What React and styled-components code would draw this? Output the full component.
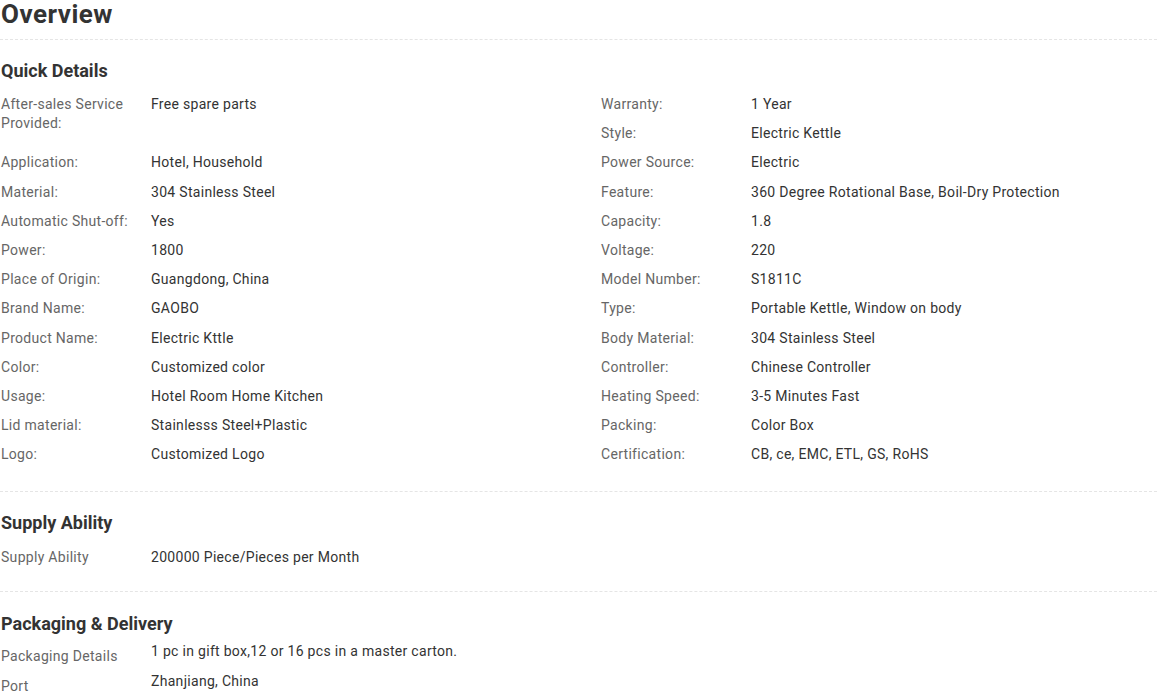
import React from 'react'
import styled, { createGlobalStyle } from 'styled-components'

const Global = createGlobalStyle`
  body {
    margin: 0;
    background: #fff;
    font-family: Roboto, "Liberation Sans", Arial, sans-serif;
    color: #333;
  }
`

const quick = [
  { label: 'After-sales Service Provided:', value: 'Free spare parts', tall: true },
  { label: 'Warranty:', value: '1 Year' },
  { label: 'Style:', value: 'Electric Kettle' },
  { label: 'Application:', value: 'Hotel, Household' },
  { label: 'Power Source:', value: 'Electric' },
  { label: 'Material:', value: '304 Stainless Steel' },
  { label: 'Feature:', value: '360 Degree Rotational Base, Boil-Dry Protection' },
  { label: 'Automatic Shut-off:', value: 'Yes' },
  { label: 'Capacity:', value: '1.8' },
  { label: 'Power:', value: '1800' },
  { label: 'Voltage:', value: '220' },
  { label: 'Place of Origin:', value: 'Guangdong, China' },
  { label: 'Model Number:', value: 'S1811C' },
  { label: 'Brand Name:', value: 'GAOBO' },
  { label: 'Type:', value: 'Portable Kettle, Window on body' },
  { label: 'Product Name:', value: 'Electric Kttle' },
  { label: 'Body Material:', value: '304 Stainless Steel' },
  { label: 'Color:', value: 'Customized color' },
  { label: 'Controller:', value: 'Chinese Controller' },
  { label: 'Usage:', value: 'Hotel Room Home Kitchen' },
  { label: 'Heating Speed:', value: '3-5 Minutes Fast' },
  { label: 'Lid material:', value: 'Stainlesss Steel+Plastic' },
  { label: 'Packing:', value: 'Color Box' },
  { label: 'Logo:', value: 'Customized Logo' },
  { label: 'Certification:', value: 'CB, ce, EMC, ETL, GS, RoHS' },
]

const packaging = [
  { label: 'Packaging Details', value: '1 pc in gift box,12 or 16 pcs in a master carton.' },
  { label: 'Port', value: 'Zhanjiang, China' },
]

export default function App() {
  return (
    <Page>
      <Global />
      <Title>Overview</Title>

      <Section>
        <Heading>Quick Details</Heading>
        <Grid>
          {quick.map((f) => (
            <Field key={f.label} tall={f.tall}>
              <Label>{f.label}</Label>
              <Value>{f.value}</Value>
            </Field>
          ))}
        </Grid>
      </Section>

      <Section>
        <Heading>Supply Ability</Heading>
        <Field>
          <Label>Supply Ability</Label>
          <Value>200000 Piece/Pieces per Month</Value>
        </Field>
      </Section>

      <Section last>
        <Heading>Packaging &amp; Delivery</Heading>
        {packaging.map((f) => (
          <PackRow key={f.label}>
            <Label>{f.label}</Label>
            <PackValue>{f.value}</PackValue>
          </PackRow>
        ))}
      </Section>
    </Page>
  )
}

const Page = styled.div`
  width: 100%;
`

const Title = styled.h1`
  margin: 0;
  padding: 0 0 11px 1px;
  font-size: 26px;
  font-weight: 700;
  line-height: 28px;
  letter-spacing: 0.5px;
  color: #333;
  border-bottom: 1px dashed #e5e5e5;
`

const Section = styled.div`
  padding: ${(p) => (p.last ? '20px 0 0 1px' : '19px 0 19px 1px')};
  border-bottom: ${(p) => (p.last ? 'none' : '1px dashed #e5e5e5')};
`

const Heading = styled.h3`
  margin: 0 0 8px;
  font-size: 18px;
  font-weight: 700;
  line-height: 24px;
  color: #333;
`

const Grid = styled.div`
  display: grid;
  grid-template-columns: 600px 1fr;
  grid-auto-rows: 29.2px;
  margin: -1px 0 3px;
`

const Field = styled.div`
  display: flex;
  align-items: flex-start;
  padding: 5px 0;
  font-size: 14px;
  line-height: 19px;
  letter-spacing: 0.3px;
  grid-row: ${(p) => (p.tall ? 'span 2' : 'auto')};
`

const Label = styled.div`
  width: 150px;
  flex-shrink: 0;
  padding-right: 10px;
  box-sizing: border-box;
  color: #666;
`

const Value = styled.div`
  color: #333;
`

const PackRow = styled.div`
  display: flex;
  align-items: flex-start;
  font-size: 14px;
  line-height: 19px;
  letter-spacing: 0.3px;
  height: 30px;
  padding-top: 3px;
  box-sizing: border-box;
`

const PackValue = styled.div`
  color: #333;
  margin-top: -5px;
`
